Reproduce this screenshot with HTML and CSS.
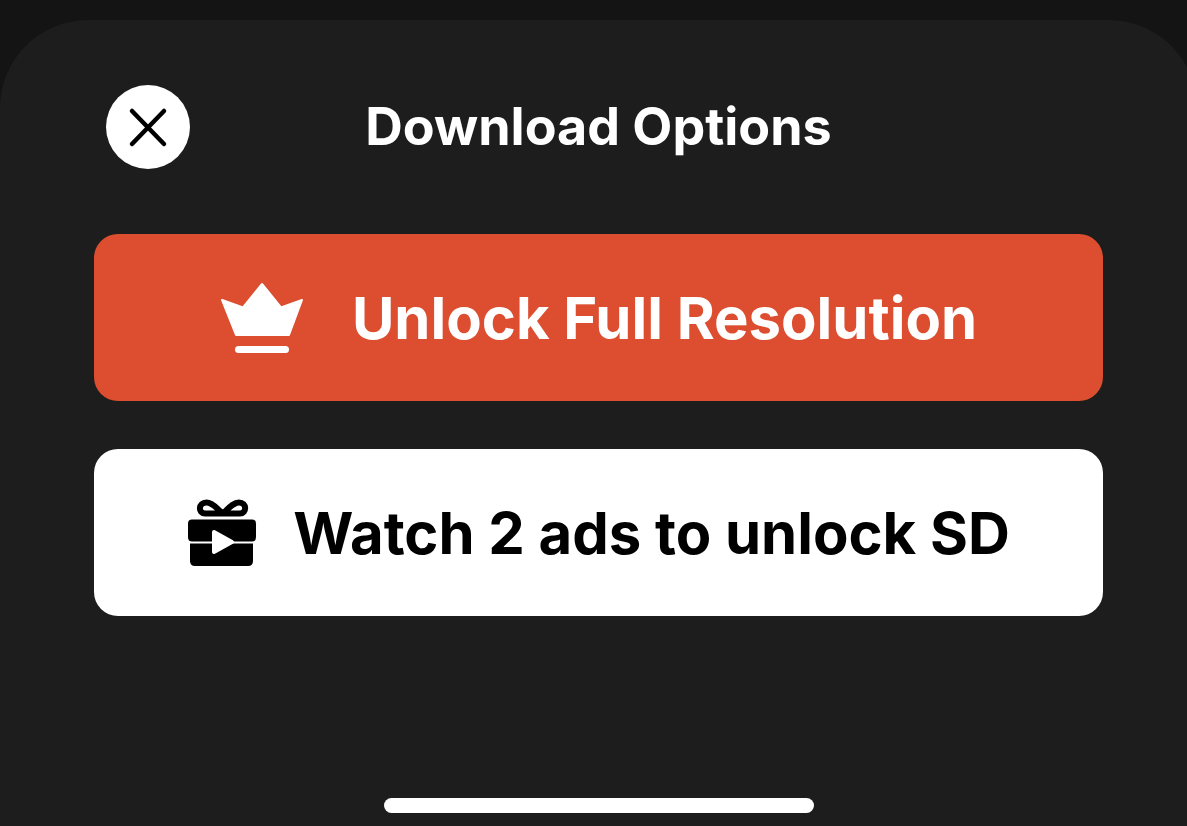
FILE: index.html
```
<!DOCTYPE html>
<html lang="en">

  <head>
    <meta charset="UTF-8">
    <meta name="viewport" content="width=device-width,initial-scale=1.0">
    <title>Download Options</title>
    <link rel="stylesheet" href="styles.css">
  </head>

  <body>

    <main class="sheet">

      <header class="sheet-header">
        <button class="close-button" type="button" aria-label="Close">
          <svg width="84" height="84" viewBox="0 0 84 84">
            <path d="M26 26 L58 59 M58 26 L26 59" fill="none" stroke="#000" stroke-width="4.5" stroke-linecap="round"/>
          </svg>
        </button>
        <h1 class="title">Download Options</h1>
      </header>

      <div class="options">
        <button class="option unlock" type="button">
          <svg width="84" height="72" viewBox="0 0 84 72">
            <path d="M2 18 L23 25.5 L42 2 L61 25.5 L82 18 L69 53 H16 Z" fill="#fff" stroke="#fff" stroke-width="2" stroke-linejoin="round"/>
            <rect x="15" y="64" width="54" height="7" rx="3.5" fill="#fff"/>
          </svg>
          <span>Unlock Full Resolution</span>
        </button>

        <button class="option watch" type="button">
          <svg width="70" height="68" viewBox="0 0 70 68">
            <!-- bow -->
            <path d="M36 14.5 H18 C11 14.5 11 3.5 19.5 3.5 C26 3.5 30 10 36 14.5 C41 10 46 3.5 52 3.5 C60 3.5 60 14.5 53 14.5 H36" fill="none" stroke="#000" stroke-width="6" stroke-linejoin="round"/>
            <!-- lid and box -->
            <path d="M5 20.5 H65 Q69 20.5 69 24.5 V38 Q69 42.5 65 42.5 H5 Q1 42.5 1 38 V24.5 Q1 20.5 5 20.5 Z"/>
            <path d="M3 44.5 H66 V62 Q66 67 61 67 H8 Q3 67 3 62 Z"/>
            <path d="M27 33 L45 43 L27 53 Z" fill="#fff" stroke="#fff" stroke-width="4" stroke-linejoin="round"/>
          </svg>
          <span>Watch 2 ads to unlock SD</span>
        </button>
      </div>

      <div class="home-bar"></div>

    </main>

  </body>

</html>
```

FILE: styles.css
```
body {
  margin: 0;
  padding-top: 20px;
  box-sizing: border-box;
  min-height: 100vh;
  display: flex;
  overflow: hidden;
  background: #141414;
  font-family: Inter, "Liberation Sans", sans-serif;
}

/* runs a little past the right edge of the window */
.sheet {
  flex: 1;
  display: flex;
  flex-direction: column;
  margin-right: -10px;
  padding: 65px 94px 13px;
  border-radius: 88px 88px 0 0;
  background: #1d1d1d;
}

.sheet-header {
  display: grid;
  grid-template-columns: 84px 1fr 84px;
  align-items: center;
  padding: 0 12px;
}

.title {
  margin: 0;
  color: #fff;
  font-size: 52px;
  font-weight: 700;
  line-height: 60px;
  text-align: center;
  white-space: nowrap;
}

button {
  border: none;
  padding: 0;
  font-family: inherit;
  cursor: pointer;
}

.close-button {
  width: 84px;
  height: 84px;
  border-radius: 50%;
  background: #fff;
}

.close-button svg {
  display: block;
}

.options {
  display: flex;
  flex-direction: column;
  gap: 48px;
  margin-top: 65px;
}

.option {
  display: flex;
  align-items: center;
  justify-content: center;
  height: 167px;
  border-radius: 24px;
  font-size: 58px;
  font-weight: 700;
  line-height: 68px;
  white-space: nowrap;
}

.unlock {
  gap: 48px;
  background: #dd4e30;
  color: #fff;
}

.watch {
  gap: 36px;
  background: #fff;
  color: #000;
}

.home-bar {
  width: 430px;
  height: 15px;
  margin: auto auto 0;
  border-radius: 8px;
  background: #fff;
}
```
